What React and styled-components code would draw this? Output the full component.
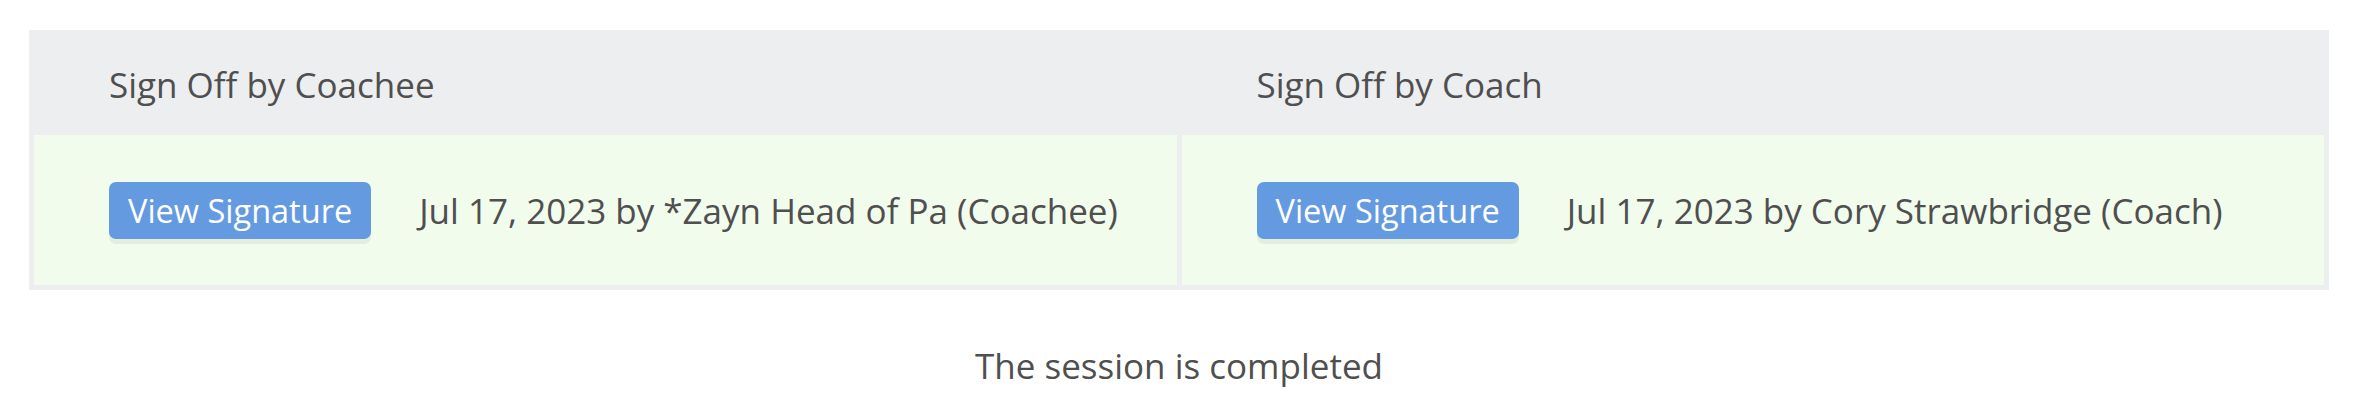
import React from "react";
import styled, { createGlobalStyle } from "styled-components";

const GlobalStyle = createGlobalStyle`
  html, body {
    margin: 0;
    padding: 0;
    background: #ffffff;
  }
  body {
    font-family: "Open Sans", "Noto Sans", sans-serif;
    color: #4f4f4f;
  }
`;

const Page = styled.div`
  padding: 30px 27px 0 29px;
`;

const SignOffTable = styled.div`
  display: grid;
  grid-template-columns: 1fr 1fr;
  column-gap: 5px;
  background: #edeef0;
  padding: 0 5px 5px;
`;

const HeaderCell = styled.div`
  height: 105px;
  box-sizing: border-box;
  display: flex;
  align-items: center;
  padding: 3px 0 0 75px;
  font-size: 35px;
  color: #4f4f4f;
`;

const BodyCell = styled.div`
  height: 150px;
  box-sizing: border-box;
  display: flex;
  align-items: center;
  padding: 0 0 0 75px;
  background: #f1fcec;
`;

const SignatureButton = styled.button`
  display: inline-flex;
  align-items: center;
  height: 57px;
  padding: 0 19px;
  border: none;
  border-radius: 7px;
  background: #649ae0;
  color: #ffffff;
  font-family: "Open Sans", "Noto Sans", sans-serif;
  font-size: 32.5px;
  box-shadow: 0 5px 0 #e3eee0;
  cursor: pointer;
  white-space: nowrap;
`;

const SignedText = styled.span`
  margin-left: 48px;
  font-size: 35px;
  color: #4f4f4f;
  white-space: nowrap;
`;

const Status = styled.div`
  margin-top: 52px;
  text-align: center;
  font-size: 35px;
  color: #4f4f4f;
`;

const signOffs = [
  { title: "Sign Off by Coachee", text: "Jul 17, 2023 by *Zayn Head of Pa (Coachee)" },
  { title: "Sign Off by Coach", text: "Jul 17, 2023 by Cory Strawbridge (Coach)" },
];

export default function App() {
  return (
    <>
      <GlobalStyle />
      <Page>
        <SignOffTable>
          {signOffs.map((s) => (
            <HeaderCell key={"h" + s.title}>{s.title}</HeaderCell>
          ))}
          {signOffs.map((s) => (
            <BodyCell key={"b" + s.title}>
              <SignatureButton>View Signature</SignatureButton>
              <SignedText>{s.text}</SignedText>
            </BodyCell>
          ))}
        </SignOffTable>
        <Status>The session is completed</Status>
      </Page>
    </>
  );
}
